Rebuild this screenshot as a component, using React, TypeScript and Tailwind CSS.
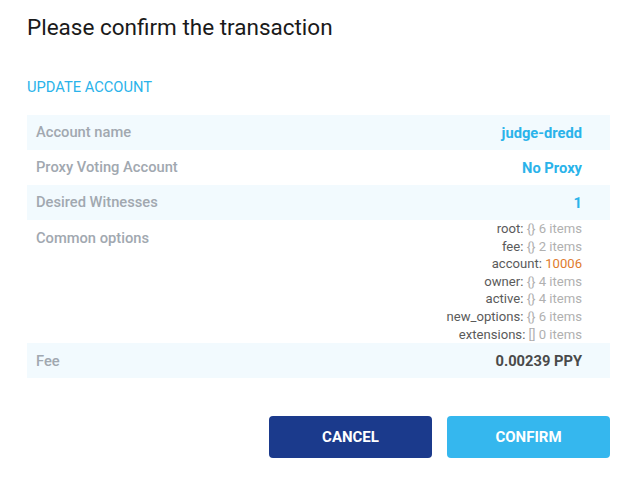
import React from "react";

const font = { fontFamily: "Roboto, 'Liberation Sans', sans-serif" };

function Row({ label, children, shaded, top }: { label: string; children: React.ReactNode; shaded?: boolean; top?: boolean }) {
  return (
    <div className={`flex justify-between pl-[9px] pr-[28px] ${shaded ? "bg-[#f2fafe]" : "bg-white"} ${top ? "items-start" : "items-center h-[35px]"}`}>
      <div className={`text-[14.7px] font-medium text-[#a1a8b0] ${top ? "pt-[7px]" : ""}`}>{label}</div>
      <div>{children}</div>
    </div>
  );
}

const opts: [string, string, boolean?][] = [
  ["root", "{} 6 items"],
  ["fee", "{} 2 items"],
  ["account", "10006", true],
  ["owner", "{} 4 items"],
  ["active", "{} 4 items"],
  ["new_options", "{} 6 items"],
  ["extensions", "[] 0 items"],
];

export default function App() {
  return (
    <div className="w-[640px] h-[483px] bg-white" style={font}>
      <div className="pl-[27px] pr-[30px] pt-[13px]">
        <h1 className="text-[22.5px] leading-[28px] text-[#1a1a1a] font-normal">Please confirm the transaction</h1>
        <div className="mt-[37px] text-[14.7px] leading-[18px] text-[#2ab3ea]">UPDATE ACCOUNT</div>
        <div className="mt-[19px]">
          <Row label="Account name" shaded>
            <span className="text-[14.7px] font-bold text-[#2ab3ea]">judge-dredd</span>
          </Row>
          <Row label="Proxy Voting Account">
            <span className="text-[14.7px] font-bold text-[#2ab3ea]">No Proxy</span>
          </Row>
          <Row label="Desired Witnesses" shaded>
            <span className="text-[14.7px] font-bold text-[#2ab3ea]">1</span>
          </Row>
          <Row label="Common options" top>
            <div className="flex flex-col items-end text-[13.1px] leading-[17.6px]">
              {opts.map(([k, v, orange]) => (
                <div key={k}>
                  <span className="text-[#5a5a5a]">{k}: </span>
                  <span className={orange ? "text-[#e07b2e]" : "text-[#b0b0b0]"}>{v}</span>
                </div>
              ))}
            </div>
          </Row>
          <Row label="Fee" shaded>
            <span className="text-[14.7px] font-bold text-[#4a4a4a]">0.00239 PPY</span>
          </Row>
        </div>
        <div className="flex justify-end gap-[15px] mt-[38px]">
          <button className="w-[163px] h-[42px] rounded-[4px] bg-[#1b3a8c] text-white text-[15px] font-bold">CANCEL</button>
          <button className="w-[163px] h-[42px] rounded-[4px] bg-[#35b7ee] text-white text-[15px] font-bold">CONFIRM</button>
        </div>
      </div>
    </div>
  );
}
